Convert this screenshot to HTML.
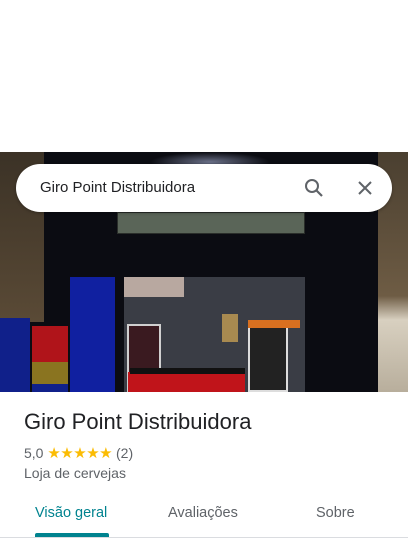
<!DOCTYPE html>
<html><head><meta charset="utf-8"><style>
*{margin:0;padding:0;box-sizing:border-box}
body{width:408px;height:544px;background:#fff;font-family:"Liberation Sans",Arial,sans-serif;position:relative;overflow:hidden}
.a{position:absolute}
</style></head><body>
<div class="a" style="left:0;top:152px;width:408px;height:240px;background:#0b0c12;overflow:hidden">
  <div class="a" style="left:0;top:0;width:44px;height:170px;background:linear-gradient(#3b3226,#5a4a36)"></div>
  <div class="a" style="left:378px;top:0;width:30px;height:240px;background:linear-gradient(#4a3f30,#6e5c44 60%,#d8d0c0 70%,#b8ae9c)"></div>
  <div class="a" style="left:150px;top:0;width:120px;height:20px;background:radial-gradient(ellipse at center,#6a7088,#0b0c12 70%)"></div>
  <div class="a" style="left:117px;top:60px;width:188px;height:22px;background:#5a6558;border:1px solid #2a2e2a"></div>
  <div class="a" style="left:124px;top:125px;width:181px;height:115px;background:#3a3d45"></div>
  <div class="a" style="left:124px;top:125px;width:60px;height:20px;background:#b8a8a0"></div>
  <div class="a" style="left:127px;top:172px;width:34px;height:70px;border:2px solid #d0d0d0;background:#3a1a20"></div>
  <div class="a" style="left:128px;top:220px;width:117px;height:20px;background:#c0141a"></div>
  <div class="a" style="left:130px;top:216px;width:115px;height:6px;background:#111"></div>
  <div class="a" style="left:248px;top:172px;width:40px;height:68px;border:2px solid #ddd;background:#222"></div>
  <div class="a" style="left:248px;top:168px;width:52px;height:8px;background:#d87020"></div>
  <div class="a" style="left:222px;top:162px;width:16px;height:28px;background:#a88a50"></div>
  <div class="a" style="left:70px;top:125px;width:45px;height:115px;background:#1020a0"></div>
  <div class="a" style="left:0;top:166px;width:30px;height:74px;background:#10208a"></div>
  <div class="a" style="left:32px;top:174px;width:36px;height:36px;background:#b0141a"></div>
  <div class="a" style="left:32px;top:210px;width:36px;height:22px;background:#8a7420"></div>
  <div class="a" style="left:32px;top:232px;width:36px;height:8px;background:#10208a"></div>
</div>
<div class="a" style="left:16px;top:164px;width:376px;height:48px;background:#fff;border-radius:24px;box-shadow:0 1px 3px rgba(0,0,0,.3)"></div>
<div class="a" style="left:40px;top:179px;font-size:15px;color:#202124">Giro Point Distribuidora</div>
<svg class="a" style="left:302px;top:176px" width="24" height="24" viewBox="0 0 24 24"><circle cx="10" cy="10" r="6" fill="none" stroke="#5f6368" stroke-width="2"/><path d="M14.5 14.5L20 20" stroke="#5f6368" stroke-width="2.2"/></svg>
<svg class="a" style="left:353px;top:176px" width="24" height="24" viewBox="0 0 24 24"><path d="M6 6L18 18M18 6L6 18" stroke="#5f6368" stroke-width="2"/></svg>
<div class="a" style="left:24px;top:409px;font-size:22px;color:#202124">Giro Point Distribuidora</div>
<div class="a" style="left:24px;top:444px;font-size:14px;color:#5f6368">5,0 <span style="color:#fbbc04;font-size:15px;letter-spacing:-0.5px">★★★★★</span> (2)</div>
<div class="a" style="left:24px;top:465px;font-size:14px;color:#5f6368">Loja de cervejas</div>
<div class="a" style="left:35px;top:505px;font-size:14.5px;color:#00838f">Visão geral</div>
<div class="a" style="left:168px;top:505px;font-size:14.5px;color:#5f6368">Avaliações</div>
<div class="a" style="left:316px;top:505px;font-size:14.5px;color:#5f6368">Sobre</div>
<div class="a" style="left:35px;top:533px;width:74px;height:4px;background:#00838f;border-radius:2px 2px 0 0"></div>
<div class="a" style="left:0;top:537px;width:408px;height:1px;background:#dadce0"></div>
</body></html>
